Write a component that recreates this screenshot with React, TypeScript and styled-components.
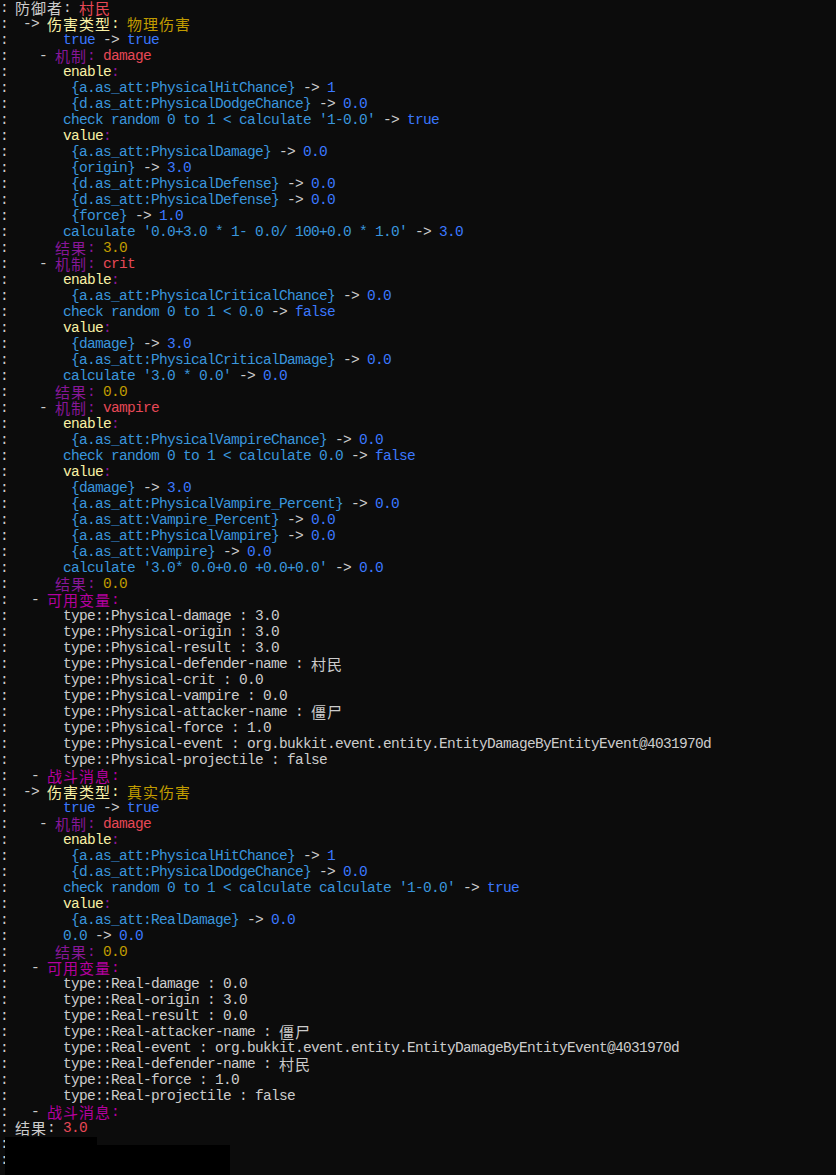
import React from 'react';
import styled, { createGlobalStyle } from 'styled-components';

const COLORS = {
  w: '#cccccc',
  e: '#f9f1a5',
  r: '#e74856',
  y: '#c19c00',
  b: '#3b78ff',
  c: '#3a96dd',
  p: '#881798',
  m: '#b4009e',
};

type ColorKey = keyof typeof COLORS;
type Seg = [string, ColorKey];

const GlobalStyle = createGlobalStyle`
  html, body {
    margin: 0;
    padding: 0;
    background: #0c0c0c;
  }
  body {
    min-height: 100vh;
    overflow: hidden;
  }
`;

const Terminal = styled.div`
  position: relative;
  margin-left: -1px;
  font-family: 'Liberation Mono', 'DejaVu Sans Mono', monospace;
  font-size: 14.5px;
  letter-spacing: -0.7px;
  color: #cccccc;
  min-height: 1175px;
`;

const Line = styled.div`
  display: flex;
  align-items: flex-start;
  height: 16px;
  line-height: 16px;
  white-space: pre;
  overflow: visible;
`;

const Gutter = styled.span`
  width: 16px;
  flex-shrink: 0;
  padding-left: 1px;
  box-sizing: border-box;
  color: #cccccc;
`;

const Text = styled.span<{ $color: string }>`
  height: 16px;
  color: ${(p) => p.$color};
`;

// CJK glyphs are full width (two cells) in the console font
const Cjk = styled.span`
  display: inline-block;
  vertical-align: top;
  height: 16px;
  font-family: 'Noto Sans CJK SC', sans-serif;
  font-size: 15px;
  letter-spacing: 1px;
  line-height: 16px;
`;

const Redaction = styled.div`
  position: absolute;
  left: 6px;
  top: 1137px;
  width: 225px;
  height: 38px;
  background: #000;
  clip-path: polygon(0 0, 92px 0, 92px 8px, 225px 8px, 225px 38px, 0 38px);
`;

const sp = (n: number) => ' '.repeat(n);

const arrow = (indent: number, left: string, right: string, lc: ColorKey = 'c', rc: ColorKey = 'b'): Seg[] => [
  [sp(indent) + left, lc],
  [' -> ', 'w'],
  [right, rc],
];

const mech = (name: string): Seg[] => [['   - ', 'w'], ['机制: ', 'p'], [name, 'r']];
const label = (name: string): Seg[] => [[sp(6) + name, 'e'], [':', 'p']];
const result = (v: string): Seg[] => [[sp(5) + '结果: ', 'p'], [v, 'y']];
const section = (name: string): Seg[] => [['  - ', 'w'], [name + ':', 'm']];
const plain = (s: string): Seg[] => [[sp(6) + s, 'w']];
const dmgType = (name: string): Seg[] => [[' -> ', 'w'], ['伤害类型: ', 'e'], [name, 'y']];

const LINES: Seg[][] = [
  [['防御者: ', 'w'], ['村民', 'r']],
  dmgType('物理伤害'),
  arrow(6, 'true', 'true', 'b'),
  mech('damage'),
  label('enable'),
  arrow(7, '{a.as_att:PhysicalHitChance}', '1'),
  arrow(7, '{d.as_att:PhysicalDodgeChance}', '0.0'),
  arrow(6, "check random 0 to 1 < calculate '1-0.0'", 'true'),
  label('value'),
  arrow(7, '{a.as_att:PhysicalDamage}', '0.0'),
  arrow(7, '{origin}', '3.0'),
  arrow(7, '{d.as_att:PhysicalDefense}', '0.0'),
  arrow(7, '{d.as_att:PhysicalDefense}', '0.0'),
  arrow(7, '{force}', '1.0'),
  arrow(6, "calculate '0.0+3.0 * 1- 0.0/ 100+0.0 * 1.0'", '3.0'),
  result('3.0'),
  mech('crit'),
  label('enable'),
  arrow(7, '{a.as_att:PhysicalCriticalChance}', '0.0'),
  arrow(6, 'check random 0 to 1 < 0.0', 'false'),
  label('value'),
  arrow(7, '{damage}', '3.0'),
  arrow(7, '{a.as_att:PhysicalCriticalDamage}', '0.0'),
  arrow(6, "calculate '3.0 * 0.0'", '0.0'),
  result('0.0'),
  mech('vampire'),
  label('enable'),
  arrow(7, '{a.as_att:PhysicalVampireChance}', '0.0'),
  arrow(6, 'check random 0 to 1 < calculate 0.0', 'false'),
  label('value'),
  arrow(7, '{damage}', '3.0'),
  arrow(7, '{a.as_att:PhysicalVampire_Percent}', '0.0'),
  arrow(7, '{a.as_att:Vampire_Percent}', '0.0'),
  arrow(7, '{a.as_att:PhysicalVampire}', '0.0'),
  arrow(7, '{a.as_att:Vampire}', '0.0'),
  arrow(6, "calculate '3.0* 0.0+0.0 +0.0+0.0'", '0.0'),
  result('0.0'),
  section('可用变量'),
  plain('type::Physical-damage : 3.0'),
  plain('type::Physical-origin : 3.0'),
  plain('type::Physical-result : 3.0'),
  plain('type::Physical-defender-name : 村民'),
  plain('type::Physical-crit : 0.0'),
  plain('type::Physical-vampire : 0.0'),
  plain('type::Physical-attacker-name : 僵尸'),
  plain('type::Physical-force : 1.0'),
  plain('type::Physical-event : org.bukkit.event.entity.EntityDamageByEntityEvent@4031970d'),
  plain('type::Physical-projectile : false'),
  section('战斗消息'),
  dmgType('真实伤害'),
  arrow(6, 'true', 'true', 'b'),
  mech('damage'),
  label('enable'),
  arrow(7, '{a.as_att:PhysicalHitChance}', '1'),
  arrow(7, '{d.as_att:PhysicalDodgeChance}', '0.0'),
  arrow(6, "check random 0 to 1 < calculate calculate '1-0.0'", 'true'),
  label('value'),
  arrow(7, '{a.as_att:RealDamage}', '0.0'),
  arrow(6, '0.0', '0.0'),
  result('0.0'),
  section('可用变量'),
  plain('type::Real-damage : 0.0'),
  plain('type::Real-origin : 3.0'),
  plain('type::Real-result : 0.0'),
  plain('type::Real-attacker-name : 僵尸'),
  plain('type::Real-event : org.bukkit.event.entity.EntityDamageByEntityEvent@4031970d'),
  plain('type::Real-defender-name : 村民'),
  plain('type::Real-force : 1.0'),
  plain('type::Real-projectile : false'),
  section('战斗消息'),
  [['结果: ', 'w'], ['3.0', 'r']],
  [],
  [],
];

const CJK_RE = /([\u3400-\u9fff]+)/;

const renderText = (text: string) =>
  text.split(CJK_RE).map((part, i) =>
    i % 2 === 1 ? <Cjk key={i}>{part}</Cjk> : part
  );

export default function App() {
  return (
    <>
      <GlobalStyle />
      <Terminal>
        {LINES.map((segs, i) => (
          <Line key={i}>
            <Gutter>:</Gutter>
            {segs.map(([text, color], j) => (
              <Text key={j} $color={COLORS[color]}>
                {renderText(text)}
              </Text>
            ))}
          </Line>
        ))}
        <Redaction />
      </Terminal>
    </>
  );
}
